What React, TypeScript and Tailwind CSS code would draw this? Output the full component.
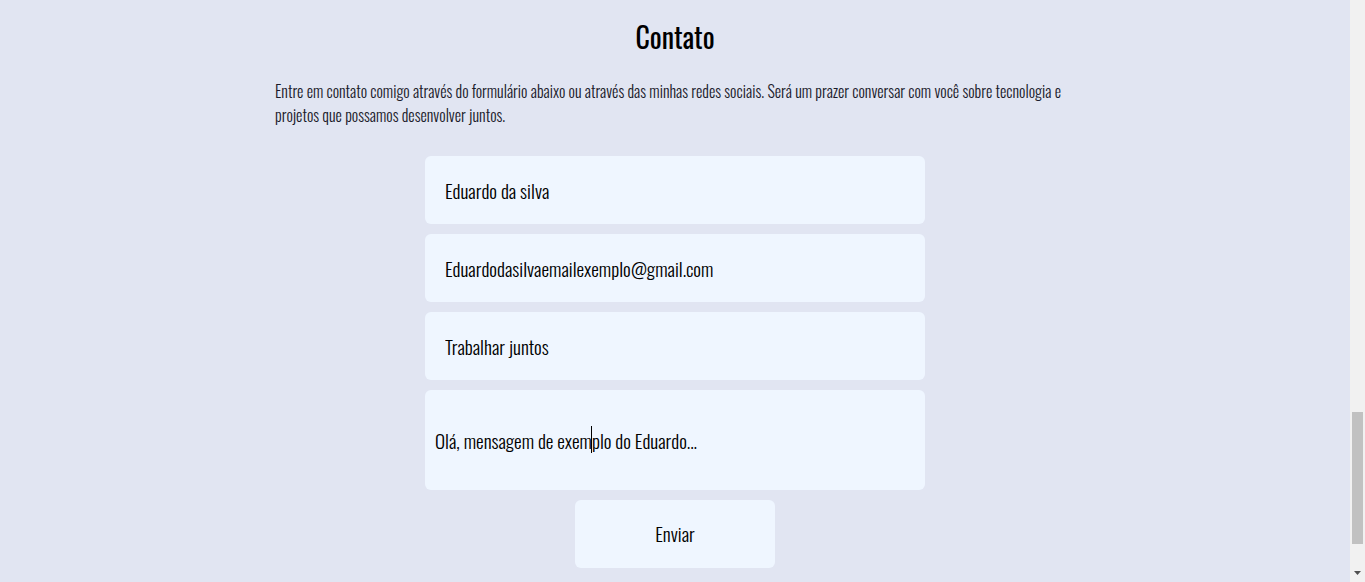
function Scrollbar() {
  // classic browser scrollbar, page scrolled near the bottom
  return (
    <div className="flex w-[15px] shrink-0 flex-col bg-[#f1f1f1]" aria-hidden>
      <div className="h-[412px]" />
      <div className="mx-[2px] h-[132px] bg-[#c1c1c1]" />
      <div className="flex flex-1 items-end justify-center pb-[7px]">
        <svg width="7" height="4" viewBox="0 0 7 4">
          <path d="M0 0h7L3.5 4z" fill="#505050" />
        </svg>
      </div>
    </div>
  );
}

export default function App() {
  return (
    <div className="flex h-[582px] overflow-hidden bg-[#e1e5f2] font-['Oswald','Roboto_Condensed',sans-serif]">
      <section id="contato" className="flex min-w-0 flex-1 flex-col items-center pt-[13px]">
        <h2 className="text-[28px] leading-[48px] font-normal text-black">Contato</h2>

        <p className="mt-[18px] w-[800px] text-[16px] leading-[24px] font-light text-[#1b1b2b]">
          Entre em contato comigo através do formulário abaixo ou através das minhas redes sociais. Será um
          prazer conversar com você sobre tecnologia e projetos que possamos desenvolver juntos.
        </p>

        <form className="mt-[29px] flex w-[500px] flex-col items-center gap-[10px]" onSubmit={(e) => e.preventDefault()}>
          <input
            type="text"
            defaultValue="Eduardo da silva"
            className="h-[68px] w-full rounded-md bg-[#eff6ff] px-5 text-[19.2px] font-light text-black outline-none"
          />
          <input
            type="email"
            defaultValue="Eduardodasilvaemailexemplo@gmail.com"
            className="h-[68px] w-full rounded-md bg-[#eff6ff] px-5 text-[19.2px] font-light text-black outline-none"
          />
          <input
            type="text"
            defaultValue="Trabalhar juntos"
            className="h-[68px] w-full rounded-md bg-[#eff6ff] px-5 text-[19.2px] font-light text-black outline-none"
          />
          <div className="relative w-full">
            <textarea
              defaultValue="Olá, mensagem de exemplo do Eduardo..."
              className="block h-[100px] w-full resize-none rounded-md bg-[#eff6ff] px-[10px] pt-[37px] text-[19.2px] font-light text-black outline-none"
            />
            {/* text caret */}
            <span className="pointer-events-none absolute top-[36px] left-[166px] h-[27px] w-px bg-black" />
          </div>
          <button
            type="submit"
            className="h-[68px] w-[200px] rounded-md bg-[#eff6ff] text-[19.2px] font-light text-black"
          >
            Enviar
          </button>
        </form>
      </section>

      <Scrollbar />
    </div>
  );
}
